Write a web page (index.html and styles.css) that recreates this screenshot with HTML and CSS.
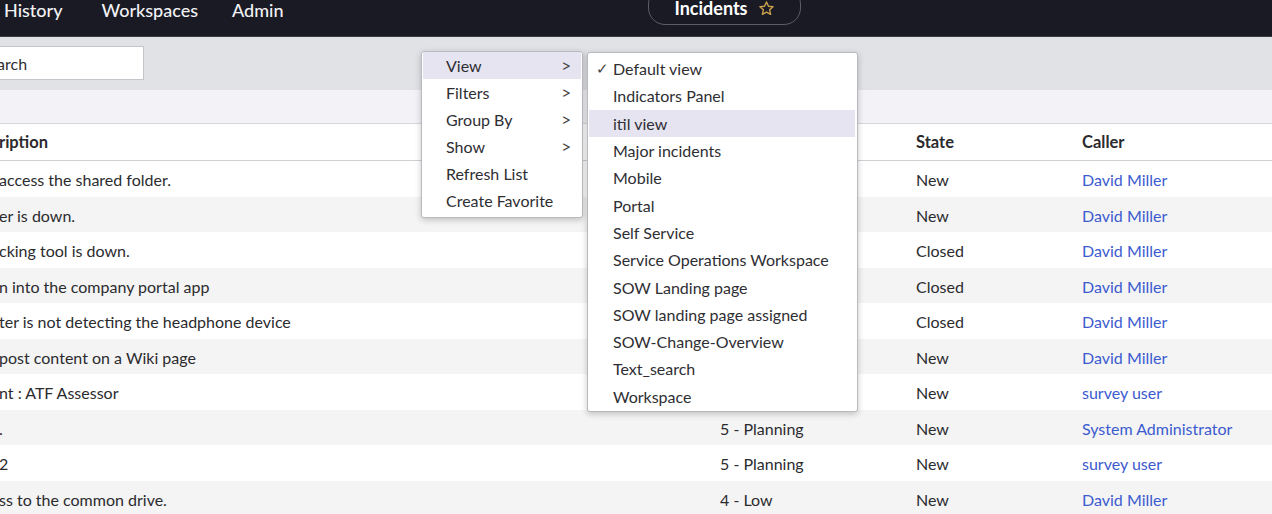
FILE: index.html
```html
<!DOCTYPE html>
<html lang="en">
<head>
<meta charset="utf-8">
<title>Incidents</title>
<link rel="stylesheet" href="styles.css">
</head>
<body>
<div class="page">
  <header class="topbar">
    <nav class="nav">
      <span class="nav-item n-history">History</span>
      <span class="nav-item n-work">Workspaces</span>
      <span class="nav-item n-admin">Admin</span>
    </nav>
    <div class="pill">
      <span class="pill-title">Incidents</span>
      <svg class="star" width="17" height="17" viewBox="0 0 24 24"><path d="M12 2.8l2.8 6 6.5.7-4.9 4.4 1.4 6.4L12 17l-5.8 3.3 1.4-6.4-4.9-4.4 6.5-.7z" fill="none" stroke="#c9a04c" stroke-width="2" stroke-linejoin="round"/></svg>
    </div>
  </header>

  <section class="toolbar">
    <input class="search" type="text" placeholder="Search">
  </section>
  <div class="filterbar"></div>

  <div class="list">
    <div class="row head">
      <div class="c-desc">ription</div>
      <div class="c-prio"></div>
      <div class="c-state">State</div>
      <div class="c-caller">Caller</div>
    </div>
    <div class="row">
      <div class="c-desc">access the shared folder.</div>
      <div class="c-prio"></div>
      <div class="c-state">New</div>
      <div class="c-caller"><a>David Miller</a></div>
    </div>
    <div class="row alt">
      <div class="c-desc">er is down.</div>
      <div class="c-prio"></div>
      <div class="c-state">New</div>
      <div class="c-caller"><a>David Miller</a></div>
    </div>
    <div class="row">
      <div class="c-desc">cking tool is down.</div>
      <div class="c-prio"></div>
      <div class="c-state">Closed</div>
      <div class="c-caller"><a>David Miller</a></div>
    </div>
    <div class="row alt">
      <div class="c-desc">n into the company portal app</div>
      <div class="c-prio"></div>
      <div class="c-state">Closed</div>
      <div class="c-caller"><a>David Miller</a></div>
    </div>
    <div class="row">
      <div class="c-desc">ter is not detecting the headphone device</div>
      <div class="c-prio"></div>
      <div class="c-state">Closed</div>
      <div class="c-caller"><a>David Miller</a></div>
    </div>
    <div class="row alt">
      <div class="c-desc">post content on a Wiki page</div>
      <div class="c-prio"></div>
      <div class="c-state">New</div>
      <div class="c-caller"><a>David Miller</a></div>
    </div>
    <div class="row">
      <div class="c-desc">nt : ATF Assessor</div>
      <div class="c-prio"></div>
      <div class="c-state">New</div>
      <div class="c-caller"><a>survey user</a></div>
    </div>
    <div class="row alt">
      <div class="c-desc">.</div>
      <div class="c-prio">5 - Planning</div>
      <div class="c-state">New</div>
      <div class="c-caller"><a>System Administrator</a></div>
    </div>
    <div class="row">
      <div class="c-desc">2</div>
      <div class="c-prio">5 - Planning</div>
      <div class="c-state">New</div>
      <div class="c-caller"><a>survey user</a></div>
    </div>
    <div class="row alt">
      <div class="c-desc">ss to the common drive.</div>
      <div class="c-prio">4 - Low</div>
      <div class="c-state">New</div>
      <div class="c-caller"><a>David Miller</a></div>
    </div>
  </div>

  <div class="menu context">
    <div class="mi active"><span>View</span><span class="chev">&gt;</span></div>
    <div class="mi"><span>Filters</span><span class="chev">&gt;</span></div>
    <div class="mi"><span>Group By</span><span class="chev">&gt;</span></div>
    <div class="mi"><span>Show</span><span class="chev">&gt;</span></div>
    <div class="mi"><span>Refresh List</span></div>
    <div class="mi"><span>Create Favorite</span></div>
  </div>

  <div class="menu submenu">
    <div class="si"><span class="check">✓</span>Default view</div>
    <div class="si"><span class="check"></span>Indicators Panel</div>
    <div class="si active"><span class="check"></span>itil view</div>
    <div class="si"><span class="check"></span>Major incidents</div>
    <div class="si"><span class="check"></span>Mobile</div>
    <div class="si"><span class="check"></span>Portal</div>
    <div class="si"><span class="check"></span>Self Service</div>
    <div class="si"><span class="check"></span>Service Operations Workspace</div>
    <div class="si"><span class="check"></span>SOW Landing page</div>
    <div class="si"><span class="check"></span>SOW landing page assigned</div>
    <div class="si"><span class="check"></span>SOW-Change-Overview</div>
    <div class="si"><span class="check"></span>Text_search</div>
    <div class="si"><span class="check"></span>Workspace</div>
  </div>
</div>
</body>
</html>
```

FILE: styles.css
```css
* { box-sizing: border-box; }
html, body {
  margin: 0;
  padding: 0;
  width: 1272px;
  height: 514px;
  overflow: hidden;
  background: #ffffff;
  font-family: Lato, "Open Sans", "Liberation Sans", sans-serif;
  color: #2b2b2e;
}
.page {
  position: relative;
  width: 1272px;
  height: 514px;
  overflow: hidden;
}

/* top bar */
.topbar {
  height: 37px;
  background: #191a24;
  border-bottom: 1px solid #3a3b44;
  display: flex;
  align-items: flex-start;
}
.nav {
  flex: 0 0 648px;
  display: flex;
  padding-left: 4px;
}
.nav-item {
  color: #f2f2f4;
  font-size: 18px;
  line-height: 20px;
  font-weight: 500;
}
.n-work { margin-left: 39px; }
.n-admin { margin-left: 34px; }
.pill {
  flex: 0 0 153px;
  height: 38px;
  margin-top: -13px;
  border: 1px solid #5b5d68;
  border-radius: 17px;
  display: flex;
  align-items: flex-end;
  justify-content: center;
  gap: 10px;
  padding-bottom: 5px;
}
.pill-title {
  color: #ffffff;
  font-weight: 700;
  font-size: 18px;
  line-height: 21px;
}
.star { margin-bottom: 2px; }

/* toolbar */
.toolbar {
  height: 53px;
  background: #e1e2e6;
  padding-top: 9px;
}
.search {
  display: block;
  margin-left: -33px;
  width: 177px;
  height: 34px;
  border: 1px solid #c4c5ca;
  background: #ffffff;
  padding: 0 0 0 12px;
  font-family: inherit;
  font-size: 16px;
  color: #2b2b2e;
  outline: none;
}
.search::placeholder { color: #2e2e33; opacity: 1; }
.filterbar {
  height: 34px;
  background: #f2f2f7;
  border-bottom: 1px solid #d6d6db;
}

/* list */
.list { display: flex; flex-direction: column; }
.row {
  display: grid;
  grid-template-columns: 720px 196px 166px 1fr;
  height: 35.5px;
  align-items: center;
  font-size: 16px;
  background: #ffffff;
  padding-top: 2px;
}
.row.alt { background: #f4f4f5; }
.row.head {
  height: 37px;
  padding-top: 0;
  font-weight: 700;
  font-size: 16.5px;
  border-bottom: 1px solid #cfd0d4;
}
.row > div { white-space: nowrap; overflow: hidden; }
.c-desc { margin-left: -1px; }
.c-caller a { color: #3b5bcf; }

/* menus */
.menu {
  position: absolute;
  background: #ffffff;
  border: 1px solid #b9b9c0;
  border-radius: 3px;
  box-shadow: 0 2px 6px rgba(0, 0, 0, 0.22);
  font-size: 16px;
  color: #2e2e33;
}
.context {
  left: 421px;
  top: 51px;
  width: 162px;
  padding: 0 1px 3px 1px;
}
.mi {
  height: 27px;
  display: flex;
  align-items: center;
  justify-content: space-between;
  padding: 0 10px 0 23px;
}
.mi.active { background: #e6e4f1; }
.chev { font-size: 17px; color: #444; }
.submenu {
  left: 587px;
  top: 52px;
  width: 271px;
  padding: 2px 2px 1px 0;
}
.si {
  height: 27.3px;
  display: flex;
  align-items: center;
  padding-left: 8px;
}
.si.active { background: #e6e4f1; margin-left: 1px; }
.si.active .check { width: 16px; }
.check {
  display: inline-block;
  width: 17px;
  font-size: 15px;
  color: #444;
}
```
